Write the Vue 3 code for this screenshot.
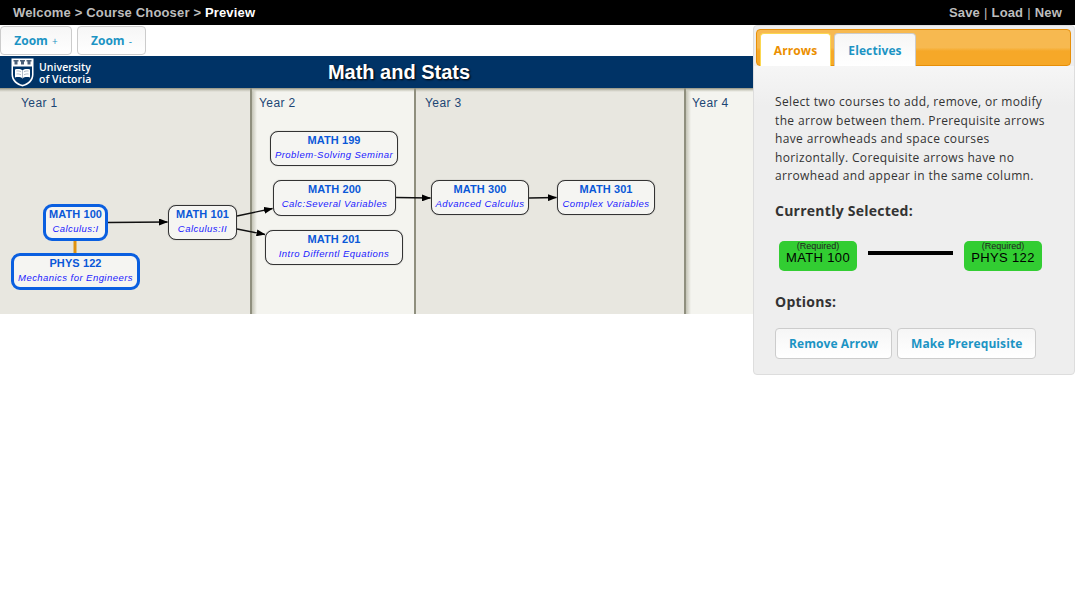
<template>
  <div class="page">
    <header class="topbar">
      <nav class="crumbs">
        Welcome &gt; Course Chooser &gt; <b>Preview</b>
      </nav>
      <nav class="file-links">
        <span>Save</span><i>|</i><span>Load</span><i>|</i><span>New</span>
      </nav>
    </header>

    <div class="toolbar">
      <button class="btn zoom-in">Zoom <small>+</small></button>
      <button class="btn zoom-out">Zoom <small>-</small></button>
    </div>

    <section class="planner">
      <div class="banner">
        <div class="logo">
          <svg width="23" height="29" viewBox="0 0 23 29">
            <path d="M.5.5h22v16c0 6.500-5 10.500-11 12-6-1.500-11-5.500-11-12z" fill="#fff" />
            <path d="M2 8.500h19v8c0 5-4.200 8.800-9.500 10.300C6.200 25.300 2 21.500 2 16.500z" fill="#003366" />
            <path d="M2.500 2h5v1.500h-1v3h-3v-3h-1zM9 2h5v1.500h-1v3h-3v-3H9zM15.500 2h5v1.500h-1v3h-3v-3h-1z" fill="#4a5f78" />
            <path d="M4 11.500c3-.8 5.800-.5 7.500 1 1.700-1.500 4.500-1.800 7.500-1v8c-3-.8-5.800-.5-7.500 1-1.700-1.500-4.500-1.800-7.500-1z" fill="#fff" />
            <path d="M11.500 12.500v8M5.500 13c1.600-.2 3 0 4.500.8M13 13.800c1.500-.8 2.900-1 4.500-.8M5.500 16c1.600-.2 3 0 4.500.8M13 16.800c1.500-.8 2.900-1 4.500-.8" stroke="#7d8ea3" stroke-width=".6" fill="none" />
          </svg>
          <div class="logo-text">University<br />of Victoria</div>
        </div>
        <h1>Math and Stats</h1>
      </div>

      <div class="canvas">
        <div
          v-for="year in years"
          :key="year.label"
          class="year"
          :class="{ alt: year.alt }"
          :style="{ width: year.width + 'px', paddingLeft: year.pad + 'px' }"
        >
          {{ year.label }}
        </div>

        <svg class="arrows" width="798" height="226" viewBox="0 88 798 226">
          <defs>
            <marker id="head" markerWidth="9" markerHeight="7" refX="8.500" refY="3.500" orient="auto" markerUnits="userSpaceOnUse">
              <path d="M0 0l9 3.500-9 3.500z" fill="#000" />
            </marker>
          </defs>
          <line
            v-for="(a, i) in arrows"
            :key="i"
            :x1="a[0]"
            :y1="a[1]"
            :x2="a[2]"
            :y2="a[3]"
            stroke="#111"
            stroke-width="1.300"
            marker-end="url(#head)"
          />
          <line x1="75" y1="240" x2="75" y2="254" stroke="#e0920f" stroke-width="3" />
        </svg>

        <div
          v-for="c in courses"
          :key="c.code"
          class="course"
          :class="{ picked: c.picked }"
          :style="{ left: c.x + 'px', top: c.y - 88 + 'px', width: c.w + 'px', height: c.h + 'px' }"
        >
          <strong>{{ c.code }}</strong>
          <em>{{ c.name }}</em>
        </div>
      </div>
    </section>

    <aside class="side-panel">
      <div class="tabs">
        <a class="tab active">Arrows</a>
        <a class="tab">Electives</a>
      </div>
      <div class="panel-body">
        <p class="help">
          Select two courses to add, remove, or modify the arrow between them. Prerequisite arrows
          have arrowheads and space courses horizontally. Corequisite arrows have no arrowhead and
          appear in the same column.
        </p>
        <h3>Currently Selected:</h3>
        <div class="selected">
          <div class="chip"><small>(Required)</small>MATH 100</div>
          <div class="link-line"></div>
          <div class="chip"><small>(Required)</small>PHYS 122</div>
        </div>
        <h3 class="options-title">Options:</h3>
        <div class="options">
          <button class="btn">Remove Arrow</button>
          <button class="btn">Make Prerequisite</button>
        </div>
      </div>
    </aside>
  </div>
</template>

<script setup>
const years = [
  { label: 'Year 1', width: 252, pad: 21, alt: false },
  { label: 'Year 2', width: 164, pad: 7, alt: true },
  { label: 'Year 3', width: 270, pad: 9, alt: false },
  { label: 'Year 4', width: 112, pad: 6, alt: true },
]

const courses = [
  { code: 'MATH 100', name: 'Calculus:I', x: 43, y: 204, w: 65, h: 37, picked: true },
  { code: 'PHYS 122', name: 'Mechanics for Engineers', x: 11, y: 253, w: 129, h: 37, picked: true },
  { code: 'MATH 101', name: 'Calculus:II', x: 168, y: 205, w: 69, h: 35 },
  { code: 'MATH 199', name: 'Problem-Solving Seminar', x: 270, y: 131, w: 128, h: 35 },
  { code: 'MATH 200', name: 'Calc:Several Variables', x: 273, y: 180, w: 123, h: 36 },
  { code: 'MATH 201', name: 'Intro Differntl Equations', x: 265, y: 230, w: 138, h: 35 },
  { code: 'MATH 300', name: 'Advanced Calculus', x: 431, y: 180, w: 98, h: 35 },
  { code: 'MATH 301', name: 'Complex Variables', x: 557, y: 180, w: 98, h: 35 },
]

const arrows = [
  [108, 222.5, 167.5, 222],
  [237, 216, 272.5, 208.500],
  [237, 229, 265, 234.500],
  [396, 197.500, 430.500, 198],
  [529, 198, 556.500, 197.500],
]
</script>

<style>
html,
body {
  background: #fff;
}
</style>

<style scoped>
.page {
  position: relative;
  height: 589px;
  overflow: hidden;
  font-family: "Liberation Sans", Arial, sans-serif;
}

.topbar {
  height: 25px;
  background: #000;
  color: #bdbdbd;
  font-size: 13px;
  font-weight: 700;
  letter-spacing: 0.16px;
  display: flex;
  align-items: center;
  justify-content: space-between;
  padding: 0 13px;
}

.crumbs b {
  color: #fff;
}

.file-links i {
  font-style: normal;
  font-weight: 400;
  margin: 0 4px;
}

.toolbar {
  height: 31px;
  display: flex;
  gap: 5px;
  padding-top: 1px;
  box-sizing: border-box;
}

.btn {
  font-family: "Open Sans", sans-serif;
  font-weight: 700;
  font-size: 12px;
  color: #1c94c4;
  border: 1px solid #ccc;
  border-radius: 4px;
  background: linear-gradient(#f6f6f6, #fff);
  padding: 0;
  cursor: pointer;
}

.btn small {
  font-size: 10px;
  margin-left: 1px;
  font-weight: 400;
}

.zoom-in {
  width: 72px;
  height: 29px;
}

.zoom-out {
  width: 69px;
  height: 29px;
}

.planner {
  width: 798px;
}

.banner {
  position: relative;
  height: 32px;
  background: #003366;
  display: flex;
  align-items: center;
  justify-content: center;
}

.banner h1 {
  margin: 0;
  font-size: 20px;
  line-height: 32px;
  font-weight: 700;
  color: #fff;
  text-shadow: 1px 1px 2px #000;
}

.logo {
  position: absolute;
  left: 11px;
  top: 2px;
  display: flex;
  gap: 5px;
  align-items: center;
}

.logo-text {
  color: #fff;
  font-family: "Open Sans", sans-serif;
  font-size: 10.500px;
  line-height: 12px;
  font-weight: 600;
  letter-spacing: 0.05px;
}

.canvas {
  position: relative;
  height: 226px;
  display: flex;
}

.year {
  box-sizing: border-box;
  padding-top: 8px;
  background: linear-gradient(#8f8f7e, #c9c8bc 2px, #e8e7e0 4px);
  border-right: 2px solid #8f8f7e;
  color: #1c4674;
  font-size: 12px;
  letter-spacing: 0.4px;
  line-height: 14px;
}

.year.alt {
  background:
    linear-gradient(#8f8f7e, #cfcfc3 2px, transparent 4px),
    linear-gradient(90deg, #c4c4b6, #f4f4ef 5px);
}

.year:last-of-type {
  border-right: 0;
}

.arrows {
  position: absolute;
  left: 0;
  top: 0;
}

.course {
  position: absolute;
  box-sizing: border-box;
  border: 1px solid #333;
  border-radius: 8px;
  background: #f5f5f2;
  box-shadow: 0 0 1px #777;
  display: flex;
  flex-direction: column;
  align-items: center;
  padding-top: 1px;
  white-space: nowrap;
}

.course.picked {
  border: 3px solid #0a5fe0;
  border-radius: 9px;
  padding-top: 0;
  box-shadow: none;
}

.course strong {
  font-size: 11px;
  line-height: 14px;
  letter-spacing: 0.1px;
  color: #0a58d8;
}

.course em {
  font-size: 9.500px;
  line-height: 16px;
  letter-spacing: 0.45px;
  color: #1a1aff;
}

.course.picked em {
  line-height: 15px;
}

.side-panel {
  position: absolute;
  left: 753px;
  top: 25px;
  width: 322px;
  height: 350px;
  box-sizing: border-box;
  padding: 3px;
  background: #eee;
  border: 1px solid #ddd;
  border-radius: 4px;
  font-family: "Open Sans", sans-serif;
  color: #333;
}

.tabs {
  height: 37px;
  box-sizing: border-box;
  padding: 3px 0 0 3px;
  display: flex;
  gap: 3px;
  background: linear-gradient(#f7b950 0, #f7b950 50%, #f6a828 60%, #f6a828 100%);
  border: 1px solid #e78f08;
  border-radius: 4px;
  margin-left: -1px;
}

.tab {
  box-sizing: border-box;
  height: 33px;
  display: flex;
  align-items: center;
  justify-content: center;
  font-size: 12px;
  font-weight: 700;
  letter-spacing: 0.1px;
  color: #1c94c4;
  width: 82px;
  background: linear-gradient(#f6f6f6, #fff);
  border: 1px solid #ccc;
  border-bottom: 0;
  border-radius: 4px 4px 0 0;
}

.tab.active {
  width: 71px;
  color: #eb8f00;
  background: #fff;
  border-color: #fbd850;
}

.panel-body {
  padding: 27px 21px 0;
  background: linear-gradient(#f6f6f6, #eee 40px);
  margin: 0 -3px;
}

.help {
  margin: 0;
  font-size: 12px;
  line-height: 18.500px;
  letter-spacing: 0.35px;
}

h3 {
  margin: 15px 0 0;
  font-size: 14px;
  line-height: 20px;
  font-weight: 700;
  letter-spacing: 0.25px;
}

.selected {
  margin: 20px 0 0 4px;
  width: 263px;
  display: flex;
  align-items: center;
  justify-content: space-between;
}

.chip {
  width: 78px;
  height: 30px;
  box-sizing: border-box;
  background: #32cd32;
  border-radius: 5px;
  color: #000;
  font-family: "Liberation Sans", Arial, sans-serif;
  font-size: 13px;
  letter-spacing: 0.35px;
  line-height: 13px;
  text-align: center;
  padding-top: 1px;
  display: flex;
  flex-direction: column;
}

.chip small {
  font-size: 9px;
  line-height: 9px;
  letter-spacing: 0;
  color: #222;
}

.link-line {
  width: 85px;
  height: 4px;
  background: #000;
  margin: -6px 1px 0 0;
}

.options-title {
  margin-top: 21px;
}

.options {
  margin-top: 16px;
  display: flex;
  gap: 5px;
}

.options .btn {
  height: 31px;
  padding: 0 13px;
  letter-spacing: 0.08px;
}
</style>
